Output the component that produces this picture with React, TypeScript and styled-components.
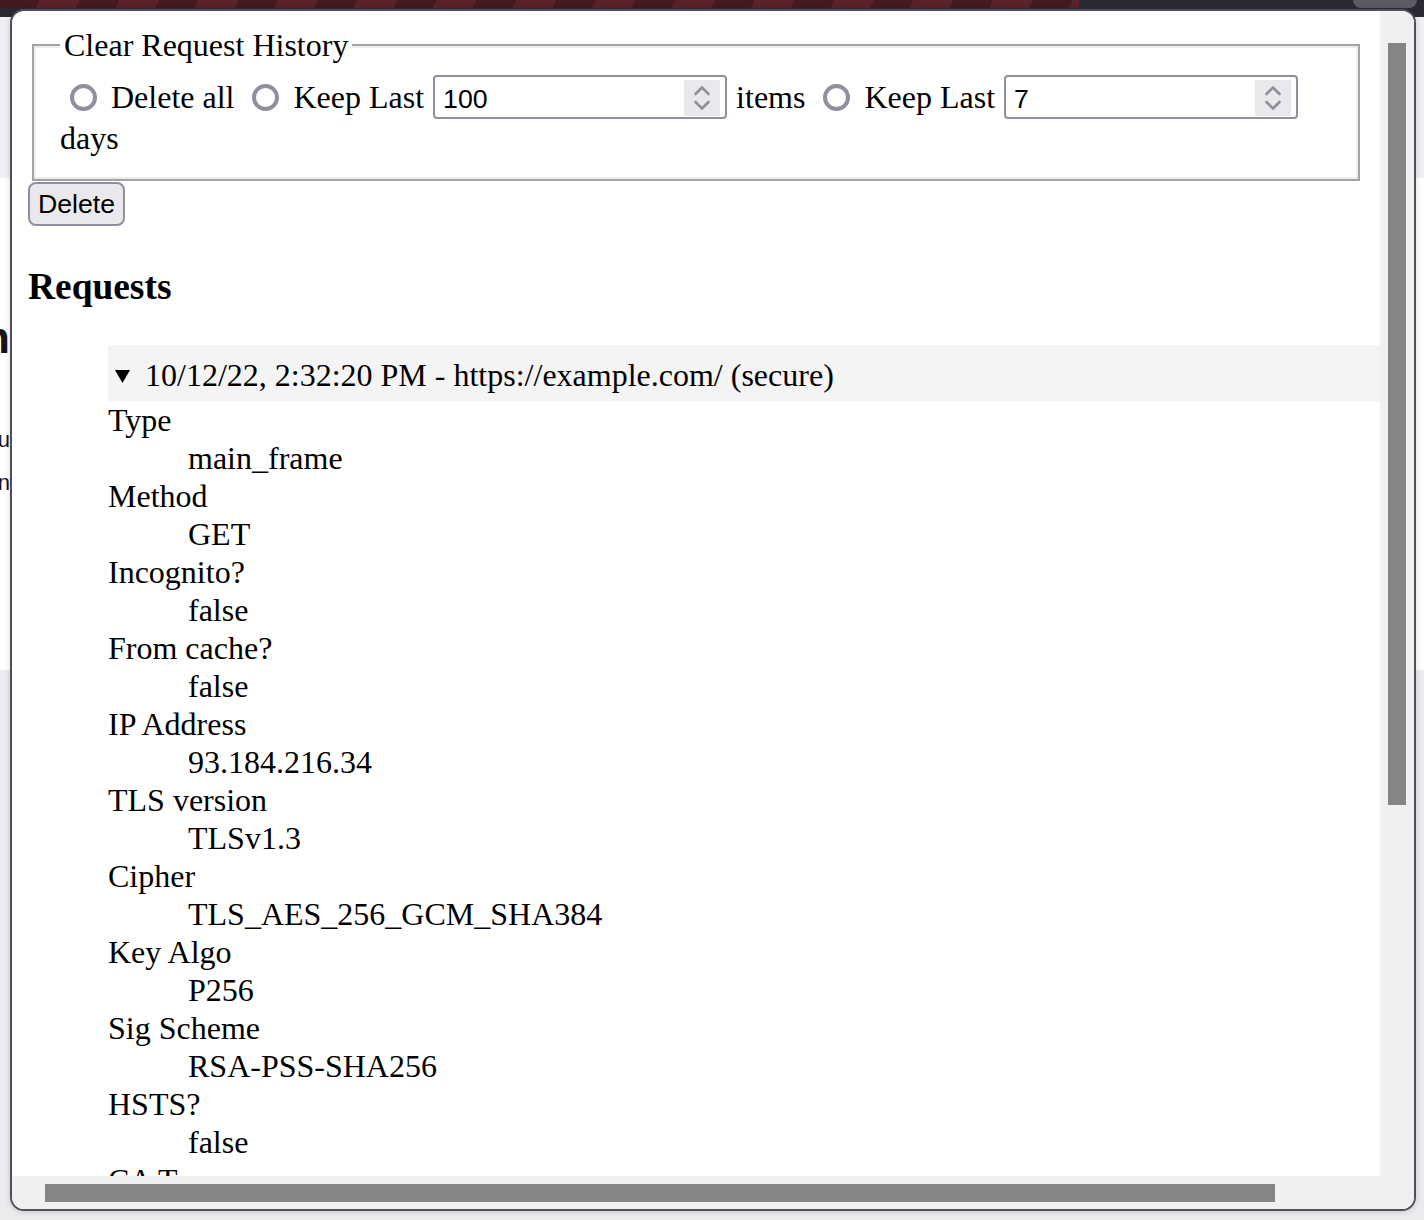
import styled, { createGlobalStyle } from 'styled-components';

const GlobalStyle = createGlobalStyle`
  html, body {
    margin: 0;
    padding: 0;
  }
  body {
    width: 1424px;
    height: 1220px;
    overflow: hidden;
    background: #f0f0f4;
    font-family: 'Liberation Serif', 'Times New Roman', serif;
  }
`;

const Screen = styled.div`
  position: relative;
  width: 1424px;
  height: 1220px;
  display: flex;
  flex-direction: column;
  overflow: hidden;
`;

/* browser chrome behind the popup */
const TabStrip = styled.div`
  height: 8px;
  display: flex;
  background: #2b2a33;
`;

const ThemedTabs = styled.div`
  width: 1079px;
  background: repeating-linear-gradient(115deg, #461820 0 36px, #5a2229 36px 72px);
`;

const Filler = styled.div`
  flex: 1;
`;

const ActionTab = styled.div`
  width: 64px;
  margin-right: 7px;
  background: #5b5b66;
  border-radius: 0 0 8px 8px;
`;

const Toolbar = styled.div`
  height: 9px;
  background: #2b2a33;
`;

const PageHeader = styled.div`
  height: 161px;
  background: #f0f0f4;
`;

const PageContent = styled.div`
  height: 492px;
  background: #fff;
`;

const PageEdge = styled.div`
  width: 10px;
  overflow: hidden;
  display: flex;
  flex-direction: column;
  align-items: flex-end;
`;

const PageTitle = styled.div`
  margin-top: 135px;
  font: bold 44px/50px 'Liberation Sans', Arial, sans-serif;
  color: #15141a;
  white-space: nowrap;
`;

const PageText = styled.div<{ $first?: boolean }>`
  margin-top: ${(p) => (p.$first ? '55px' : '0')};
  font: 22px/43px 'Liberation Sans', Arial, sans-serif;
  color: #15141a;
  white-space: nowrap;
`;

const PageFooter = styled.div`
  flex: 1;
  background: #ececef;
`;

/* the popup */
const Popup = styled.div`
  position: absolute;
  left: 10px;
  top: 9px;
  width: 1406px;
  height: 1202px;
  box-sizing: border-box;
  border: 2px solid #4f4e59;
  border-radius: 14px;
  background: #fff;
  overflow: hidden;
  display: grid;
  grid-template-columns: 1fr 34px;
  grid-template-rows: 1fr 33px;
  box-shadow: 0 1px 6px rgba(0, 0, 0, 0.16);
`;

const Viewport = styled.div`
  min-width: 0;
  min-height: 0;
  overflow: hidden;
  padding: 16px;
  color: #000;
  font-size: 32px;
  line-height: 38px;
`;

const VTrack = styled.div`
  background: #f0f0f0;
  padding: 32px 8px 0;
`;

const VThumb = styled.div`
  height: 762px;
  background: #858585;
`;

const HTrack = styled.div`
  background: #f0f0f0;
  padding: 8px 0 0 33px;
`;

const HThumb = styled.div`
  width: 1230px;
  height: 18px;
  background: #858585;
`;

const Corner = styled.div`
  background: #f0f0f0;
`;

const HistoryBox = styled.fieldset`
  margin: 0 4px;
  padding: 12px 26px 22px;
  border: 2px solid #a3a3a3;
  box-shadow: inset 0 0 0 2px #ececec;
  min-width: 0;
`;

const Legend = styled.legend`
  padding: 0 4px;
  background: #fff;
  line-height: 36px;
`;

const Options = styled.div`
  line-height: 38px;
`;

const Radio = styled.input.attrs({ type: 'radio' })`
  appearance: none;
  display: inline-block;
  box-sizing: border-box;
  width: 27px;
  height: 27px;
  margin: 0 6px 0 10px;
  border: 4px solid #8f8f9d;
  border-radius: 50%;
  background: #fff;
  vertical-align: -3px;
`;

const NumberBox = styled.span`
  display: inline-flex;
  box-sizing: border-box;
  width: 294px;
  height: 44px;
  margin: 0 1px;
  padding: 0 5px 0 8px;
  border: 2px solid #8f8f9d;
  border-radius: 4px;
  background: #fff;
  align-items: flex-start;
  font: 26.67px 'Liberation Sans', Arial, sans-serif;
  color: #000;
`;

const NumberValue = styled.span`
  flex: 1;
  margin-top: 7px;
  line-height: 30px;
`;

const Spinner = styled.span`
  display: flex;
  width: 36px;
  height: 36px;
  margin-top: 3px;
  background: #e9e9ed;
`;

const DeleteButton = styled.button`
  display: block;
  box-sizing: border-box;
  height: 44px;
  margin: 1px 0 0;
  padding: 0 8px;
  border: 2px solid #8f8f9d;
  border-radius: 8px;
  background: #e9e9ed;
  font: 26.67px/40px 'Liberation Sans', Arial, sans-serif;
  color: #000;
`;

const Heading = styled.h3`
  margin: 39px 0 37px;
  font-size: 37.44px;
  line-height: 43px;
  font-weight: bold;
`;

const RequestList = styled.ul`
  list-style: none;
  margin: 0;
  padding: 0 0 0 80px;
`;

const Details = styled.details`
  width: 1400px;
`;

const Summary = styled.summary`
  display: block;
  list-style: none;
  padding: 11px 8px 7px 7px;
  background: #f4f4f4;
  &::-webkit-details-marker {
    display: none;
  }
`;

const Marker = styled.svg`
  width: 15px;
  height: 13px;
  margin-right: 15px;
  vertical-align: 3px;
`;

const Fields = styled.dl`
  margin: 0;
`;

const Term = styled.dt`
  line-height: 38px;
`;

const Value = styled.dd`
  margin: 0 0 0 80px;
  line-height: 38px;
`;

const fields: [string, string][] = [
  ['Type', 'main_frame'],
  ['Method', 'GET'],
  ['Incognito?', 'false'],
  ['From cache?', 'false'],
  ['IP Address', '93.184.216.34'],
  ['TLS version', 'TLSv1.3'],
  ['Cipher', 'TLS_AES_256_GCM_SHA384'],
  ['Key Algo', 'P256'],
  ['Sig Scheme', 'RSA-PSS-SHA256'],
  ['HSTS?', 'false'],
  ['CA Type', 'Known Root'],
  ['Certificate', 'example.com'],
];

function NumberField({ value }: { value: string }) {
  return (
    <NumberBox>
      <NumberValue>{value}</NumberValue>
      <Spinner>
        <svg width="36" height="36" viewBox="0 0 36 36" fill="none" stroke="#8f8f9d" strokeWidth="2.6" strokeLinecap="round" strokeLinejoin="round">
          <polyline points="11.5,14 18,7.5 24.5,14" />
          <polyline points="11.5,22 18,28.5 24.5,22" />
        </svg>
      </Spinner>
    </NumberBox>
  );
}

export default function App() {
  return (
    <>
      <GlobalStyle />
      <Screen>
        <TabStrip>
          <ThemedTabs />
          <Filler />
          <ActionTab />
        </TabStrip>
        <Toolbar />
        <PageHeader />
        <PageContent>
          <PageEdge>
            <PageTitle>Request Information</PageTitle>
            <PageText $first>This page shows what the browser knows abou</PageText>
            <PageText>the connection and its security informatin</PageText>
          </PageEdge>
        </PageContent>
        <PageFooter />

        <Popup>
          <Viewport>
            <HistoryBox>
              <Legend>Clear Request History</Legend>
              <Options>
                <Radio name="clear" /> Delete all <Radio name="clear" /> Keep Last <NumberField value="100" /> items{' '}
                <Radio name="clear" /> Keep Last <NumberField value="7" /> days
              </Options>
            </HistoryBox>
            <DeleteButton>Delete</DeleteButton>
            <Heading>Requests</Heading>
            <RequestList>
              <li>
                <Details open>
                  <Summary>
                    <Marker viewBox="0 0 15 13">
                      <polygon points="0,0 15,0 7.5,13" fill="#000" />
                    </Marker>
                    10/12/22, 2:32:20 PM - https://example.com/ (secure)
                  </Summary>
                  <Fields>
                    {fields.map(([term, value]) => (
                      <div key={term}>
                        <Term>{term}</Term>
                        <Value>{value}</Value>
                      </div>
                    ))}
                  </Fields>
                </Details>
              </li>
            </RequestList>
          </Viewport>
          <VTrack>
            <VThumb />
          </VTrack>
          <HTrack>
            <HThumb />
          </HTrack>
          <Corner />
        </Popup>
      </Screen>
    </>
  );
}
